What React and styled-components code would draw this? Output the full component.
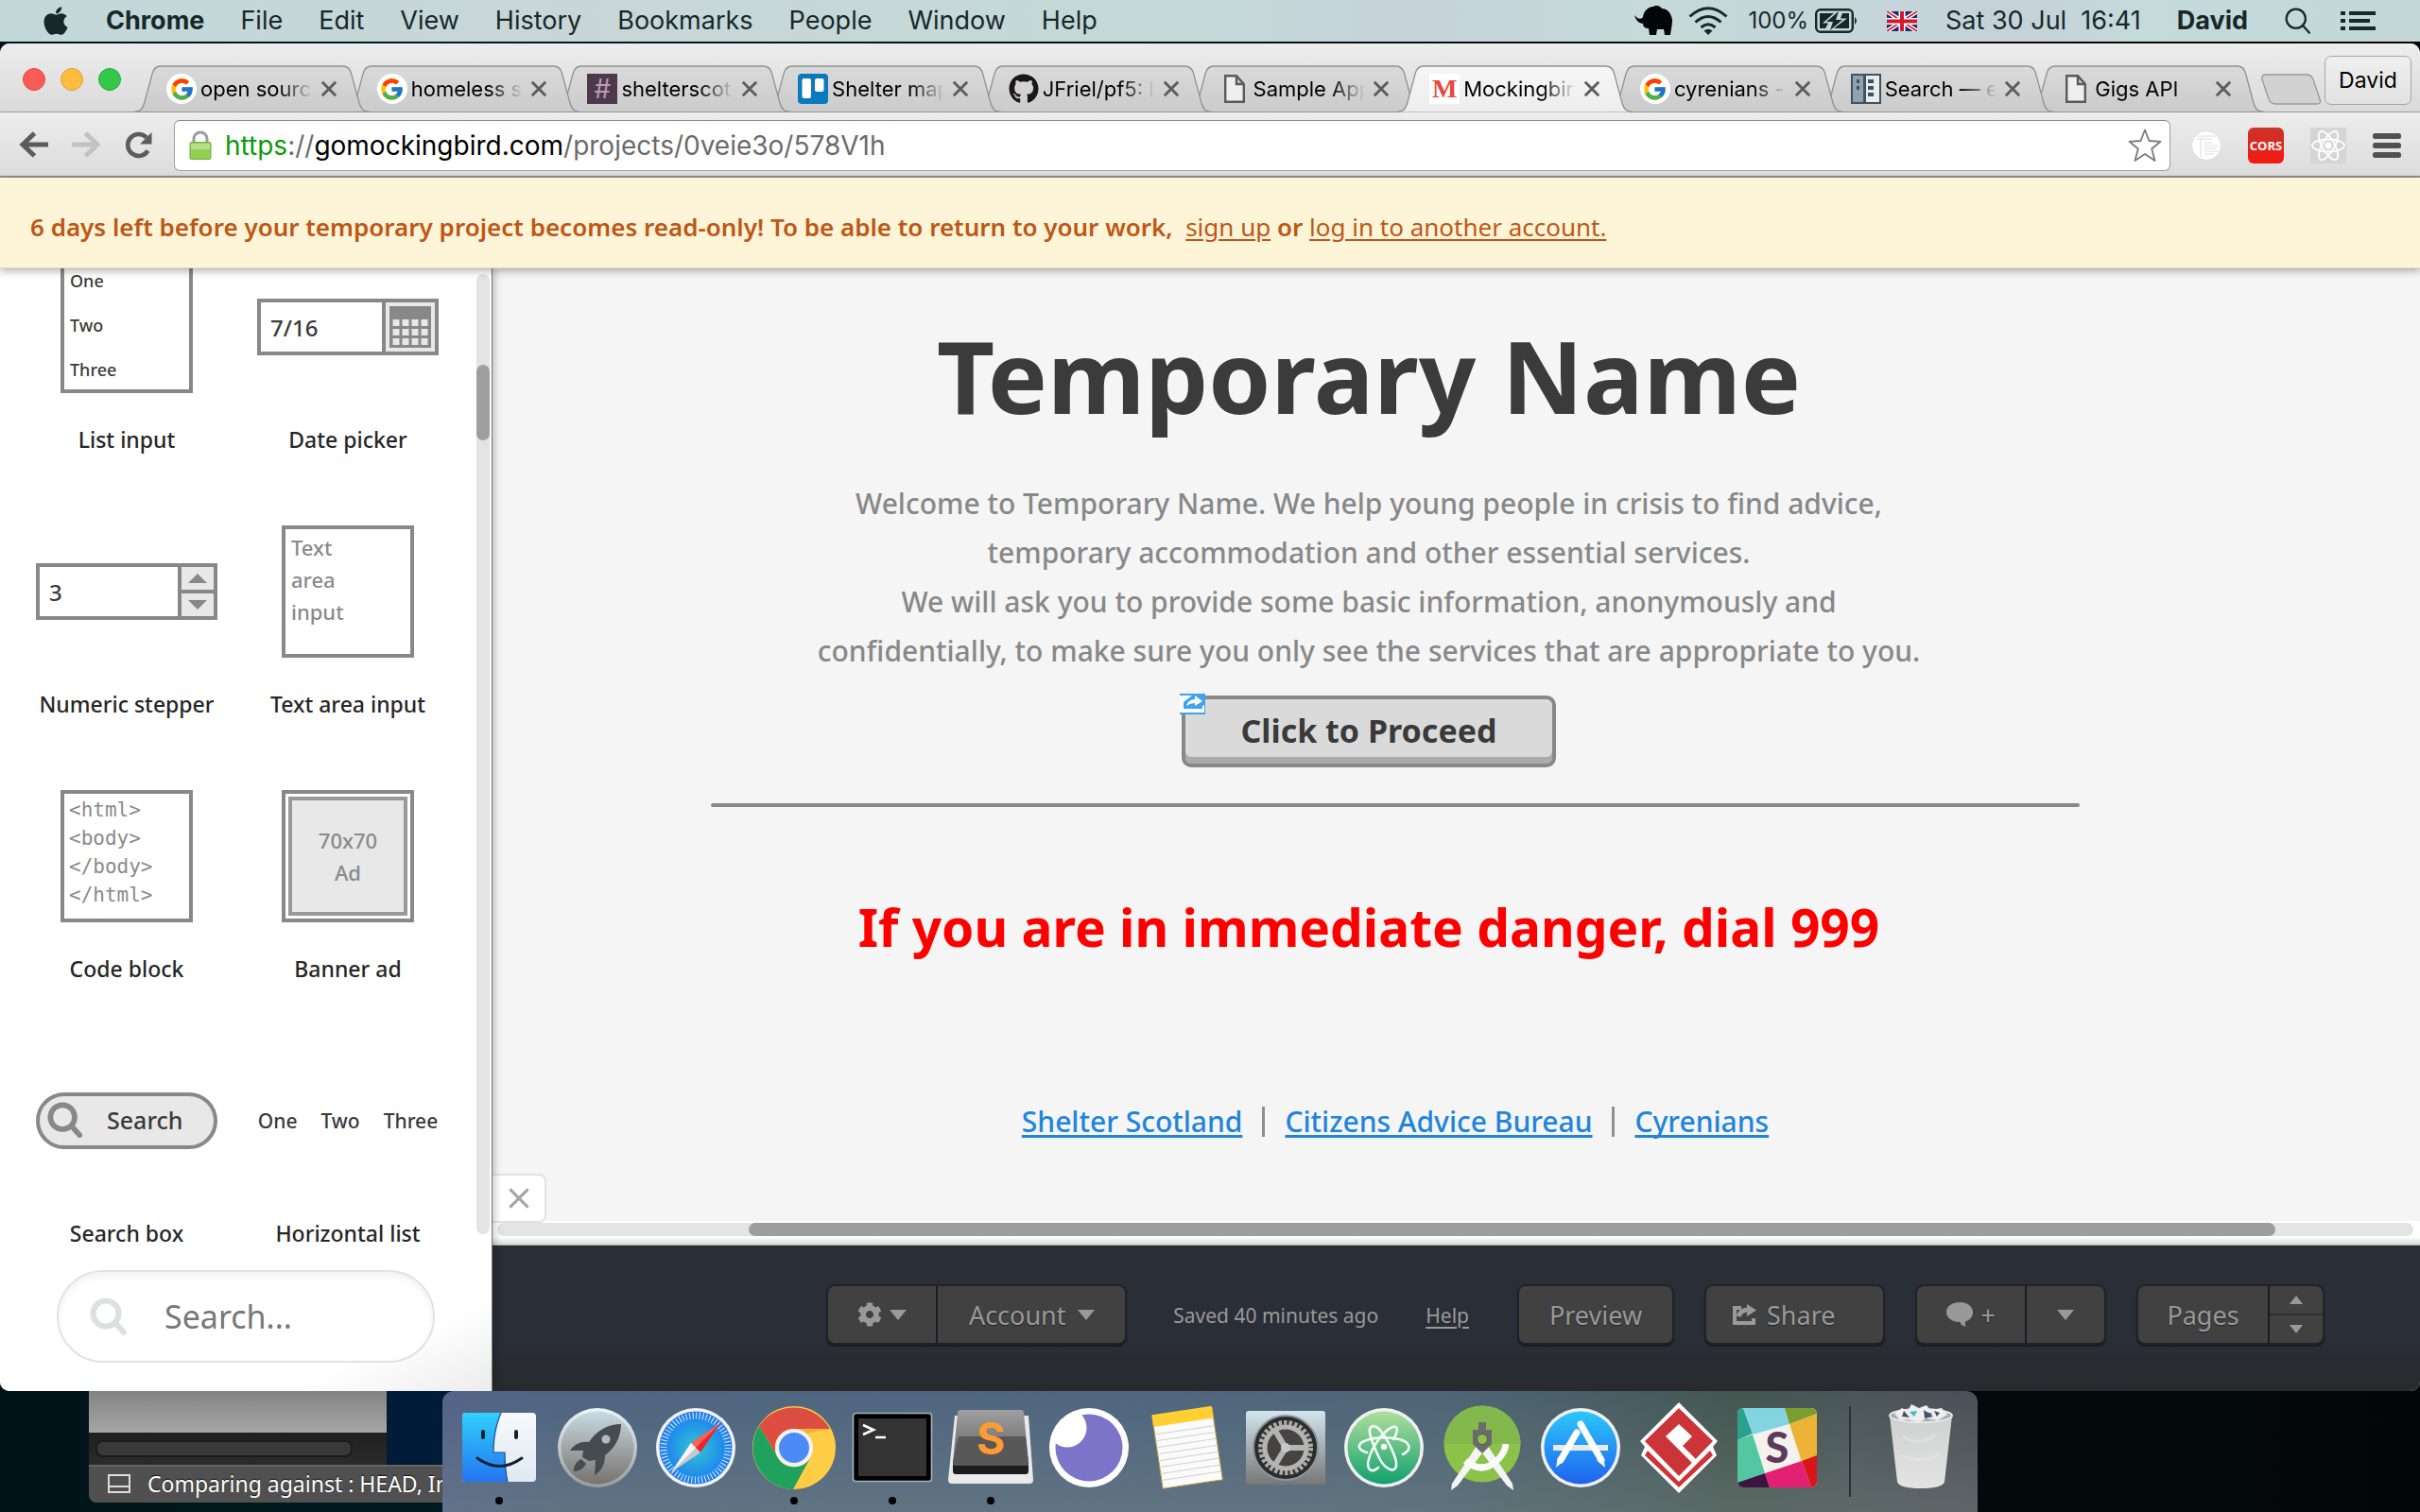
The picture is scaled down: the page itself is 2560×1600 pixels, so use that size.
import React from 'react';
import styled, { createGlobalStyle, css } from 'styled-components';
import { FaApple, FaGithub, FaCog } from 'react-icons/fa';
import { FcGoogle } from 'react-icons/fc';

const SYSTEM = '"Inter", "Liberation Sans", sans-serif';
const BODY = '"Noto Sans", "Open Sans", sans-serif';

const GlobalStyle = createGlobalStyle`
  *, *::before, *::after { box-sizing: border-box; }
  html, body { margin: 0; padding: 0; background: #000; }
  button, input, textarea { font: inherit; color: inherit; margin: 0; padding: 0; border: 0; background: none; }
  h1, h2, p, ul, pre { margin: 0; padding: 0; }
  ul { list-style: none; }
  svg { display: block; flex: none; }
`;

const Desktop = styled.div`
  display: flex;
  flex-direction: column;
  min-height: 100vh;
  overflow: hidden;
  background: linear-gradient(90deg, #001418 0%, #001b20 20%, #020a0b 80%, #030606 100%);
  font-family: ${SYSTEM};
`;

/* ---------- system menu bar ---------- */

const MenuBar = styled.header`
  display: flex;
  align-items: center;
  justify-content: space-between;
  height: 44px;
  margin-bottom: 2px;
  padding: 0 46px 0 42px;
  background: linear-gradient(90deg, #c2d8d8, #c9d6d8 24%, #c5d8d8 42%, #c5d9d9 50%, #c6d3da 58%, #c5dad9 68%, #c5d2d9 84%, #c5dadb 88%, #c2d7d6);
  color: #16282a;
  font-size: 27px;
  line-height: 44px;
`;

const MenuGroup = styled.nav`
  display: flex;
  align-items: center;
  gap: 38px;
`;

const AppleButton = styled.button`
  margin-right: -2px;
`;

const MenuItem = styled.button`
  font-weight: ${(p) => (p.$strong ? 700 : 400)};
  white-space: pre;
`;

const StatusGroup = styled.div`
  display: flex;
  align-items: center;
  gap: ${(p) => p.$gap}px;
`;

const Percent = styled.span`
  font-size: 24px;
`;

/* ---------- browser chrome ---------- */

const Browser = styled.section`
  display: flex;
  flex: 1;
  flex-direction: column;
  overflow: hidden;
  border-radius: 10px;
  background: #ebebeb;
`;

const TabStrip = styled.div`
  display: flex;
  align-items: flex-end;
  height: 73px;
  padding: 0 9px 0 24px;
  border-bottom: 1px solid #9a9a9a;
  background: linear-gradient(#ededed, #dadada);
`;

const Lights = styled.div`
  display: flex;
  gap: 16px;
  margin-right: 14px;
  padding-bottom: 22px;
`;

const Light = styled.button`
  && {
    width: 24px;
    height: 24px;
    border: 1px solid ${(p) => p.$edge};
    border-radius: 50%;
    background: ${(p) => p.$fill};
  }
`;

const TabList = styled.div`
  display: flex;
  flex: 1;
  min-width: 0;
  margin: 0 -3px -1px 0;
`;

const Tab = styled.div`
  position: relative;
  z-index: ${(p) => p.$z};
  display: flex;
  flex: 1 1 0;
  align-items: center;
  min-width: 0;
  height: 50px;
  padding: 0 34px;
  & + & { margin-left: -26px; }
`;

const TabShape = styled.svg`
  position: absolute;
  z-index: -1;
  inset: 0;
  width: 100%;
  height: 100%;
`;

const TabTitle = styled.span`
  flex: 1;
  min-width: 0;
  margin: 0 8px 0 4px;
  overflow: hidden;
  color: #000;
  font-size: 22px;
  line-height: 32px;
  white-space: nowrap;
  mask-image: linear-gradient(90deg, #000 calc(100% - 36px), transparent);
`;

const TabClose = styled.button`
  flex: none;
  width: 18px;
  height: 18px;
`;

const TabIcon = styled.span`
  display: flex;
  flex: none;
  align-items: center;
  justify-content: center;
  width: 32px;
  height: 32px;
  border-radius: ${(p) => p.$radius || 0};
  background: ${(p) => p.$fill || 'transparent'};
  color: ${(p) => p.$ink || '#000'};
  font: ${(p) => p.$weight || 400} 28px/32px ${(p) => p.$font || SYSTEM};
`;

const NewTab = styled.button`
  && { margin-bottom: 7px; }
`;

const Profile = styled.button`
  && {
    width: 92px;
    height: 52px;
    margin: 0 0 7px 3px;
    border: 1px solid #a5a5a5;
    border-radius: 7px;
    background: linear-gradient(#efefef, #e2e2e2);
    font-size: 23px;
  }
`;

const Toolbar = styled.div`
  display: flex;
  align-items: center;
  height: 69px;
  padding: 2px 20px 0;
  border-bottom: 2px solid #8f8f8f;
  background: linear-gradient(#ededed, #dcdcdc);
`;

const NavButtons = styled.div`
  display: flex;
  gap: 25px;
  margin-right: 22px;
`;

const IconButton = styled.button`
  display: flex;
`;

const Omnibox = styled.div`
  display: flex;
  flex: 1;
  align-items: center;
  height: 54px;
  padding: 0 8px 0 15px;
  border: 1px solid #a0a0a0;
  border-top-color: #8a8a8a;
  border-radius: 6px;
  background: #fff;
`;

const Address = styled.div`
  flex: 1;
  margin-left: 14px;
  color: #6b6b6b;
  font-size: 28px;
  line-height: 40px;
`;

const Scheme = styled.span`
  color: #0a9a0a;
`;

const Host = styled.span`
  color: #000;
`;

const Extensions = styled.div`
  display: flex;
  align-items: center;
  gap: 28px;
  margin-left: 22px;
`;

const Cors = styled.button`
  && {
    width: 38px;
    height: 38px;
    border-radius: 6px;
    background: linear-gradient(#c9342b, #f5190f);
    color: #fff;
    font: 700 13px/38px "Open Sans", sans-serif;
  }
`;

/* ---------- notice ---------- */

const Notice = styled.div`
  position: relative;
  z-index: 3;
  padding: 34px 32px 25px;
  border-bottom: 1px solid #ded8bd;
  background: #fef5d8;
  box-shadow: 0 3px 8px rgba(0, 0, 0, 0.3);
  color: #be5716;
  font: 600 26px/36px ${BODY};
`;

const NoticeLink = styled.a`
  color: inherit;
  font-weight: 400;
  text-decoration: underline;
  text-underline-offset: 3px;
`;

/* ---------- page body ---------- */

const Workspace = styled.div`
  display: flex;
  flex: 1;
  min-height: 0;
  font-family: ${BODY};
`;

const Sidebar = styled.aside`
  position: relative;
  z-index: 2;
  display: flex;
  flex: none;
  flex-direction: column;
  width: 521px;
  border-right: 1px solid #777;
  background: linear-gradient(155deg, #fff 93%, #ececec 100%);
  box-shadow: 2px 0 8px rgba(0, 0, 0, 0.25);
`;

const Palette = styled.div`
  display: flex;
  flex: 1 1 0;
  min-height: 0;
  overflow: hidden;
`;

const PaletteGrid = styled.div`
  display: grid;
  flex: 1;
  grid-template-columns: repeat(2, 1fr);
  grid-auto-rows: 280px;
  margin: -8px 19px 0 17px;
`;

const Cell = styled.div`
  display: flex;
  flex-direction: column;
  align-items: center;
`;

const Preview = styled.div`
  display: flex;
  align-items: center;
  justify-content: center;
  height: 140px;
`;

const Caption = styled.div`
  margin-top: 34px;
  color: #262626;
  font-size: 23px;
  font-weight: 500;
  line-height: 30px;
  white-space: nowrap;
`;

const boxed = css`
  border: 4px solid #888;
  background: #fff;
`;

const SquareList = styled.ul`
  && {
    ${boxed}
    display: flex;
    flex-direction: column;
    justify-content: center;
    width: 140px;
    height: 140px;
    padding: 0 6px 4px;
    color: #3a3a3a;
    font-size: 18px;
    font-weight: 500;
    line-height: 47px;
  }
`;

const Field = styled.div`
  ${boxed}
  display: flex;
  width: 192px;
  height: 60px;
`;

const FieldInput = styled.input`
  && {
    flex: 1;
    min-width: 0;
    padding-left: 10px;
    color: #3a3a3a;
    font-size: 24px;
    font-weight: 500;
  }
`;

const FieldButton = styled.button`
  && {
    display: flex;
    align-items: center;
    justify-content: center;
    width: 56px;
    border-left: 4px solid #888;
    background: #e8e8e8;
  }
`;

const Stepper = styled.div`
  display: flex;
  flex-direction: column;
  width: 38px;
  border-left: 4px solid #888;
  background: #e8e8e8;
`;

const StepButton = styled.button`
  display: flex;
  flex: 1;
  align-items: center;
  justify-content: center;
  & + & { border-top: 4px solid #888; }
`;

const SquareArea = styled.textarea`
  && {
    ${boxed}
    width: 140px;
    height: 140px;
    padding: 2px 6px;
    overflow: hidden;
    resize: none;
    color: #8a8a8a;
    font-size: 22px;
    font-weight: 500;
    line-height: 34px;
  }
`;

const CodeBox = styled.pre`
  && {
    ${boxed}
    width: 140px;
    height: 140px;
    padding: 2px 5px;
    overflow: hidden;
    color: #8a8a8a;
    font: 400 21px/30px "DejaVu Sans Mono", "Liberation Mono", monospace;
  }
`;

const AdBox = styled.div`
  ${boxed}
  display: flex;
  width: 140px;
  height: 140px;
  padding: 3px;
`;

const AdInner = styled.div`
  display: flex;
  flex: 1;
  align-items: center;
  justify-content: center;
  border: 4px solid #999;
  background: #e8e8e8;
  color: #8a8a8a;
  font-size: 22px;
  font-weight: 500;
  line-height: 34px;
  text-align: center;
`;

const SearchPill = styled.button`
  && {
    display: flex;
    align-items: center;
    gap: 25px;
    width: 192px;
    height: 60px;
    padding: 0 8px 2px;
    border: 4px solid #888;
    border-radius: 30px;
    background: #e8e8e8;
    color: #3a3a3a;
    font-size: 25px;
    font-weight: 500;
  }
`;

const InlineList = styled.ul`
  display: flex;
  gap: 25px;
  color: #3a3a3a;
  font-size: 21px;
  font-weight: 500;
`;

const VTrack = styled.div`
  flex: none;
  width: 14px;
  margin: 6px 2px 14px 0;
  padding-top: 96px;
  border-radius: 7px;
  background: #e4e4e4;
`;

const VThumb = styled.div`
  height: 80px;
  border-radius: 7px;
  background: #9f9f9f;
`;

const SearchBar = styled.label`
  display: flex;
  align-items: center;
  gap: 39px;
  height: 98px;
  margin: 24px 60px 30px;
  padding: 0 33px;
  border: 2px solid #e2e2e2;
  border-radius: 49px;
  background: #fff;
  box-shadow: inset 0 4px 8px rgba(0, 0, 0, 0.06);
  color: #777;
  font-size: 34px;
`;

const SearchInput = styled.input`
  flex: 1;
  min-width: 0;
  &::placeholder { color: #777; opacity: 1; }
`;

const Main = styled.main`
  display: flex;
  flex: 1;
  flex-direction: column;
  min-width: 0;
`;

const Canvas = styled.div`
  position: relative;
  flex: 1;
  padding: 53px 0 0 231px;
  background: #f5f5f5;
`;

const Mockup = styled.div`
  width: 1448px;
`;

const Intro = styled.section`
  display: flex;
  flex-direction: column;
  align-items: center;
  width: 1392px;
`;

const Title = styled.h1`
  color: #3b3b3b;
  font-size: 106px;
  font-weight: 700;
  line-height: 120px;
  white-space: nowrap;
`;

const Lead = styled.p`
  && { margin-top: 50px; }
  color: #888;
  font-size: 30px;
  font-weight: 500;
  line-height: 52px;
  text-align: center;
  white-space: nowrap;
`;

const Proceed = styled.button`
  && {
    position: relative;
    width: 396px;
    height: 76px;
    margin-top: 21px;
    padding-bottom: 2px;
    border: 4px solid #888;
    border-radius: 10px;
    background: #dadada;
    box-shadow: inset 0 -7px 0 #ababab;
    color: #3a3a3a;
    font-size: 34px;
    font-weight: 700;
  }
`;

const LinkBadge = styled.svg`
  position: absolute;
  top: -6px;
  left: -6px;
`;

const Rule = styled.div`
  height: 4px;
  margin-top: 38px;
  border-radius: 2px;
  background: #888;
`;

const Warning = styled.h2`
  && { margin-top: 95px; }
  width: 1392px;
  color: #f00;
  font-size: 55px;
  font-weight: 700;
  line-height: 64px;
  text-align: center;
  white-space: nowrap;
`;

const Links = styled.nav`
  display: flex;
  align-items: center;
  justify-content: center;
  gap: 21px;
  margin-top: 154px;
`;

const PageLink = styled.a`
  color: #2084dc;
  font-size: 30px;
  font-weight: 500;
  line-height: 40px;
  text-decoration: underline;
  text-decoration-skip-ink: none;
  text-underline-offset: 3px;
`;

const Divider = styled.span`
  width: 3px;
  height: 32px;
  background: #909090;
`;

const ClosePanel = styled.button`
  && {
    position: absolute;
    bottom: -2px;
    left: 0;
    display: flex;
    align-items: center;
    justify-content: center;
    width: 57px;
    height: 52px;
    border: 2px solid #e2e2e2;
    border-left: 0;
    border-radius: 0 8px 8px 0;
    background: #fff;
  }
`;

const HScroll = styled.div`
  height: 26px;
  padding: 2px 7px 10px 5px;
  background: linear-gradient(#fff 17px, #d8d8d8 25px, #888 26px);
`;

const HTrack = styled.div`
  padding-left: 13.1%;
  padding-right: 7.2%;
  border-radius: 7px;
  background: #e4e4e4;
`;

const HThumb = styled.div`
  height: 14px;
  border-radius: 7px;
  background: #9e9e9e;
`;

const Footer = styled.footer`
  display: flex;
  align-items: center;
  justify-content: flex-end;
  gap: 32px;
  height: 154px;
  padding: 0 101px 8px 0;
  background: linear-gradient(#2a2e37 60%, #272a2d);
  color: #999;
  font-size: 27px;
`;

const Group = styled.div`
  display: flex;
  height: 64px;
  overflow: hidden;
  border: 2px solid #1f2328;
  border-radius: 9px;
  background: #414141;
  box-shadow: 0 2px 1px #191c20;
`;

const FootButton = styled.button`
  && {
    display: flex;
    align-items: center;
    justify-content: ${(p) => (p.$start ? 'flex-start' : 'center')};
    gap: ${(p) => p.$gap || 0}px;
    width: ${(p) => p.$w}px;
    height: 60px;
    padding-left: ${(p) => (p.$start ? 28 : 0)}px;
    border-left: ${(p) => (p.$split ? '2px solid #1b1d20' : '0')};
    text-shadow: 0 1px 1px #222;
  }
`;

const PageStep = styled.div`
  display: flex;
  flex-direction: column;
  width: 58px;
  border-left: 2px solid #1b1d20;
`;

const PageStepButton = styled.button`
  display: flex;
  flex: 1;
  align-items: center;
  justify-content: center;
  && + && { border-top: 2px solid #303230; }
`;

const SaveInfo = styled.div`
  display: flex;
  gap: 50px;
  margin: 2px 19px 0 17px;
  font-size: 21px;
`;

const HelpLink = styled.a`
  color: inherit;
  text-underline-offset: 4px;
`;

/* ---------- background window and dock ---------- */

const DockArea = styled.div`
  position: relative;
  display: flex;
  justify-content: center;
  height: 128px;
`;

const BackWindow = styled.div`
  position: absolute;
  top: 0;
  left: 94px;
  width: 420px;
  border-radius: 0 0 8px 8px;
  overflow: hidden;
  background: #2b2b2b;
`;

const BackBody = styled.div`
  display: flex;
  height: 78px;
  background: #001c38;
`;

const BackPane = styled.div`
  width: 315px;
  height: 78px;
  padding: 52px 36px 0 7px;
  background: linear-gradient(#838383, #a6a6a6 44px, #1f1f1f 44px, #2b2b2b);
`;

const BackScroll = styled.div`
  height: 18px;
  border: 2px solid #1b1b1b;
  border-radius: 8px;
  background: #393939;
`;

const BackStatus = styled.div`
  display: flex;
  align-items: center;
  gap: 18px;
  height: 40px;
  padding: 0 0 2px 20px;
  border-top: 2px solid #666;
  background: #505050;
  color: #fff;
  font: 400 23px/36px ${BODY};
  text-shadow: 0 -1px 1px #111;
  white-space: nowrap;
`;

const Dock = styled.nav`
  position: relative;
  display: flex;
  height: 128px;
  padding: 0 8px;
  border-radius: 12px 12px 0 0;
  background:
    linear-gradient(rgba(120, 130, 130, 0), rgba(130, 140, 135, 0.35)),
    linear-gradient(90deg, #53638a 0%, #4e6580 8%, #4f667f 45%, #4e6576 65%, #475c60 78%, #44564f 84%, #4a565a 92%, #4c4f57 100%);
`;

const DockItem = styled.button`
  && {
    display: flex;
    flex-direction: column;
    align-items: center;
    width: 104px;
    padding-top: 8px;
  }
  &::after {
    content: '';
    width: 8px;
    height: 8px;
    border-radius: 50%;
    background: ${(p) => (p.$open ? '#000' : 'transparent')};
  }
`;

const DockDivider = styled.div`
  width: 2px;
  height: 96px;
  margin: 16px 22px 0 24px;
  background: #2a3236;
`;

/* ---------- drawings ---------- */

const Cross = ({ size, color, width }) => (
  <svg width={size} height={size} viewBox="0 0 20 20" stroke={color} strokeWidth={width} fill="none">
    <path d="M2 2L18 18M18 2L2 18" />
  </svg>
);

const Caret = ({ w = 18, h = 11, up, color = '#999' }) => (
  <svg width={w} height={h} viewBox="0 0 18 11" preserveAspectRatio="none" fill={color}>
    <path d={up ? 'M0 11L9 0L18 11z' : 'M0 0H18L9 11z'} />
  </svg>
);

const Loupe = ({ size, color, width = 5 }) => (
  <svg width={size} height={size} viewBox="0 0 40 40" fill="none" stroke={color} strokeWidth={width} strokeLinecap="round">
    <circle cx="17" cy="17" r="13.5" />
    <path d="M27 27L36 37" />
  </svg>
);

const Elephant = () => (
  <svg width="40" height="32" viewBox="0 0 40 32" fill="#020608">
    <path d="M0 10C3 14 7 15 9 12C10 5 15 1 20 1C23-1 27 0 29 3C35 3 39 8 40 15C40 20 39 24 38 31H32L31 25H24L23 31H16L15 24C11 24 9 22 9 19C5 19 1 15 0 10z" />
  </svg>
);

const Wifi = () => (
  <svg width="42" height="30" viewBox="0 0 42 30" fill="none" stroke="#16282a" strokeWidth="3">
    <path d="M1.500 10.500Q21-7 40.500 10.500M7.500 16.500Q21 4.500 34.500 16.500M13.500 22Q21 15.500 28.500 22" />
    <path d="M16.500 25.500Q21 22 25.500 25.500L21 30z" fill="#16282a" stroke="none" />
  </svg>
);

const Battery = () => (
  <svg width="46" height="26" viewBox="0 0 46 26">
    <rect x="1.200" y="1.200" width="38.600" height="23.600" rx="4.500" fill="none" stroke="#16282a" strokeWidth="2.400" />
    <path d="M5 5H20L8 15.500H14L11 21H5zM29 5H36V21H20L34 10.500H27z" fill="#16282a" />
    <path d="M25 3L12 14H19L16 23L29 12H22L25 3z" fill="#16282a" />
    <path d="M42 9Q46 13 42 17z" fill="#16282a" />
  </svg>
);

const Flag = () => (
  <svg width="32" height="21" viewBox="0 0 32 21">
    <rect width="32" height="21" fill="#1f2a6b" />
    <path d="M0 0L32 21M32 0L0 21" stroke="#fff" strokeWidth="4.500" />
    <path d="M0 0L32 21M32 0L0 21" stroke="#d5172f" strokeWidth="1.600" />
    <path d="M16 0V21M0 10.500H32" stroke="#fff" strokeWidth="7" />
    <path d="M16 0V21M0 10.500H32" stroke="#d5172f" strokeWidth="4" />
  </svg>
);

const ListIcon = () => (
  <svg width="38" height="22" viewBox="0 0 38 22" fill="#16282a">
    <path d="M0 1H5V5H0zM0 9H5V13H0zM0 17H5V21H0zM9 1H37V5H9zM9 9H31V13H9zM9 17H37V21H9z" />
  </svg>
);

const DocIcon = () => (
  <svg width="22" height="30" viewBox="0 0 22 30" fill="#efefef" stroke="#5a5a5a" strokeWidth="2.400">
    <path d="M1.200 1.200H13L20.800 10V28.800H1.200zM13 1.200V10H20.800" />
  </svg>
);

const TrelloIcon = () => (
  <svg width="32" height="32" viewBox="0 0 32 32">
    <rect width="32" height="32" rx="4" fill="#0a79bf" />
    <rect x="4.500" y="5" width="9.500" height="21" rx="2" fill="#fff" />
    <rect x="18" y="5" width="9.500" height="14" rx="2" fill="#fff" />
  </svg>
);

const BuildingIcon = () => (
  <svg width="32" height="32" viewBox="0 0 32 32">
    <rect width="32" height="32" fill="#42515c" />
    <path d="M2 2H13V30H2z" fill="#8ea3b1" />
    <path d="M16 2H30V30H16z" fill="#e6edf0" />
    <path d="M6 6H9V10H6zM6 13H9V17H6zM18 6H24V10H18zM18 13H24V17H18zM18 20H24V24H18z" fill="#42515c" />
  </svg>
);

const TabOutline = ({ active }) => (
  <TabShape viewBox="0 0 248 50" preserveAspectRatio="none">
    <defs>
      <linearGradient id={active ? 'tabOn' : 'tabOff'} x1="0" y1="0" x2="0" y2="1">
        <stop offset="0" stopColor={active ? '#f6f6f6' : '#dadada'} />
        <stop offset="1" stopColor={active ? '#ededed' : '#cbcbcb'} />
      </linearGradient>
    </defs>
    <path
      d="M0 49.500C7 49 9 46 11 39L19 9Q21 1 28 1H220Q227 1 229 9L237 39C239 46 241 49 248 49.500"
      fill={active ? 'url(#tabOn)' : 'url(#tabOff)'}
      stroke="#929292"
      strokeWidth="1.300"
    />
    {!active && <path d="M2 49.500H246" stroke="#929292" />}
  </TabShape>
);

const Back = ({ color, flip }) => (
  <svg width="31" height="28" viewBox="0 0 31 28" fill="none" stroke={color} strokeWidth="5">
    <path d={flip ? 'M0 14H27M14.500 2L27 14L14.500 26' : 'M31 14H4M16.500 2L4 14L16.500 26'} />
  </svg>
);

const Reload = () => (
  <svg width="30" height="30" viewBox="0 0 30 30">
    <path d="M24.500 20.500A11.500 11.500 0 1 1 23 6.500" fill="none" stroke="#5c5c5c" strokeWidth="4.600" />
    <path d="M28.500 1V13.500H16z" fill="#5c5c5c" />
  </svg>
);

const Lock = () => (
  <svg width="24" height="32" viewBox="0 0 24 32">
    <path d="M5 14V9A7 7 0 0 1 19 9V14" fill="none" stroke="#9b9b9b" strokeWidth="3" />
    <rect x="1" y="12.500" width="22" height="18" rx="1.500" fill="#92d050" stroke="#6cad3c" />
    <path d="M2 14H22V20H2z" fill="#b5e08a" />
  </svg>
);

const Star = () => (
  <svg width="36" height="36" viewBox="0 0 36 36" fill="#fff" stroke="#7a7a7a" strokeWidth="1.800" strokeLinejoin="round">
    <path d="M18 1.500L22.500 13L34.500 13.800L25.200 21.500L28.500 34L18 27L7.500 34L10.800 21.500L1.500 13.800L13.500 13z" />
  </svg>
);

const PageExt = () => (
  <svg width="32" height="32" viewBox="0 0 32 32">
    <circle cx="16" cy="16" r="15.500" fill="#fff" stroke="#ddd" />
    <path d="M6 6H26M6 9H22M14 13H22M14 16H28M14 19H26M14 22H29M14 25H24M10 8V28" stroke="#dcdcdc" strokeWidth="1" />
  </svg>
);

const ReactExt = () => (
  <svg width="38" height="38" viewBox="0 0 38 38">
    <rect width="38" height="38" fill="#d5d5d5" />
    <g fill="none" stroke="#fff" strokeWidth="1.800">
      <ellipse cx="19" cy="19" rx="17" ry="6.500" />
      <ellipse cx="19" cy="19" rx="17" ry="6.500" transform="rotate(60 19 19)" />
      <ellipse cx="19" cy="19" rx="17" ry="6.500" transform="rotate(120 19 19)" />
    </g>
    <circle cx="19" cy="19" r="3.500" fill="#fff" />
  </svg>
);

const Burger = () => (
  <svg width="30" height="26" viewBox="0 0 30 26" fill="#505050">
    <rect width="30" height="6" rx="2.500" />
    <rect y="10" width="30" height="6" rx="2.500" />
    <rect y="20" width="30" height="6" rx="2.500" />
  </svg>
);

const Calendar = () => (
  <svg width="44" height="44" viewBox="0 0 44 44">
    <rect width="44" height="44" fill="#888" />
    {[14, 24, 34].map((y) => [3.5, 13.5, 23.5, 33.5].map((x) => (
      <rect key={`${x}-${y}`} x={x} y={y} width="7" height="7" fill="#e8e8e8" />
    )))}
  </svg>
);

const ShareIcon = () => (
  <svg width="26" height="22" viewBox="0 0 26 22" fill="none" stroke="#999" strokeWidth="4">
    <path d="M9 4H2V20H22V15" />
    <path d="M6 13Q8 6 17 6" strokeWidth="5" />
    <path d="M15 0L25 6.500L15 13z" fill="#999" stroke="none" />
  </svg>
);

const Bubble = () => (
  <svg width="28" height="26" viewBox="0 0 28 26" fill="#999">
    <path d="M14 0C22 0 28 4.500 28 10.500C28 16 24 19.500 20 20.500C19.500 23 20 24.500 20.500 26C17 25 15 23 14.500 21C6 21 0 16.500 0 10.500C0 4.500 6 0 14 0z" />
  </svg>
);

const Icon = ({ children }) => (
  <svg width="104" height="104" viewBox="0 0 104 104">{children}</svg>
);

const Grad = ({ id, a, b }) => (
  <linearGradient id={id} x1="0" y1="0" x2="0" y2="1">
    <stop offset="0" stopColor={a} />
    <stop offset="1" stopColor={b} />
  </linearGradient>
);

const Finder = () => (
  <Icon>
    <defs><Grad id="fa" a="#30d0fb" b="#2475f2" /><Grad id="fb" a="#f8f9fb" b="#dfe9f3" /></defs>
    <rect x="13" y="15" width="78" height="73" rx="4" fill="url(#fb)" />
    <path d="M17 15H54C48 29 46 42 46 57H58C58 69 59 79 61 88H17Q13 88 13 84V19Q13 15 17 15z" fill="url(#fa)" />
    <path d="M54 15C48 29 46 42 46 57H58C58 69 59 79 61 88" fill="none" stroke="#1e4d8c" strokeWidth="1.200" />
    <path d="M35 35V41M70 35V41" stroke="#10222f" strokeWidth="4" strokeLinecap="round" />
    <path d="M29 63Q52 80 76 63" fill="none" stroke="#10222f" strokeWidth="3" strokeLinecap="round" />
  </Icon>
);

const Launchpad = () => (
  <Icon>
    <defs><Grad id="la" a="#c9dbe2" b="#77726f" /><Grad id="lb" a="#eaf6fa" b="#9a9a9a" /></defs>
    <circle cx="52" cy="52" r="42" fill="url(#lb)" />
    <circle cx="52" cy="52" r="38.500" fill="url(#la)" />
    <path d="M77 27C63 27 51 34 43 46C35 45 28 48 23 55L37 55L36 62L43 66L50 65L49 81C57 76 60 69 60 60C71 52 77 40 77 27z" fill="#454b50" />
    <path d="M35 64C29 67 27 71 27 77C33 77 37 74 40 69z" fill="#454b50" />
    <circle cx="61" cy="43" r="4.500" fill="#aebdc3" />
  </Icon>
);

const Safari = () => (
  <Icon>
    <defs><radialGradient id="sb"><stop offset="0" stopColor="#2fc9d8" /><stop offset="1" stopColor="#1d78ef" /></radialGradient></defs>
    <circle cx="52" cy="52" r="42" fill="#f2f2f2" />
    <circle cx="52" cy="52" r="38.500" fill="url(#sb)" />
    <circle cx="52" cy="52" r="34" fill="none" stroke="#dff0ff" strokeWidth="7" strokeDasharray="1 2.560" />
    <path d="M78 26L57 57L47 47z" fill="#e8262d" />
    <path d="M78 26L47 47L52 52z" fill="#ff6158" />
    <path d="M26 78L47 47L57 57z" fill="#c9c9c9" />
    <path d="M26 78L47 47L52 52z" fill="#f7f7f7" />
  </Icon>
);

const ChromeIcon = () => (
  <Icon>
    <circle cx="52" cy="52" r="44" fill="#ffcd46" />
    <path d="M15 29A44 44 0 0 1 90 32H52A20 20 0 0 0 34 61z" fill="#de4d42" />
    <path d="M15 29A44 44 0 0 0 51 96L69 63A20 20 0 0 1 34 61z" fill="#20a25f" />
    <path d="M52 32H90L60 38z" fill="#dfa92f" opacity="0.700" />
    <circle cx="52" cy="52" r="20" fill="#f2f2f2" />
    <circle cx="52" cy="52" r="16" fill="#4c8bf5" />
  </Icon>
);

const Terminal = () => (
  <Icon>
    <rect x="10.500" y="15.500" width="83" height="72" rx="3" fill="#000" stroke="#a7b3b8" strokeWidth="1.600" />
    <rect x="16" y="21" width="72" height="61" fill="#333" />
    <path d="M21 28L32 33L21 38M34 41H45" fill="none" stroke="#fff" strokeWidth="2.600" />
  </Icon>
);

const Sublime = () => (
  <Icon>
    <defs><Grad id="su" a="#a0a0a0" b="#5c5c5c" /></defs>
    <path d="M14 18H92L97 86Q97 90 93 90H11Q7 90 7 86z" fill="#e9e9e9" />
    <path d="M12 70H92V77Q92 80 89 80H15Q12 80 12 77z" fill="#1c1c1c" />
    <path d="M20 12H84Q87 12 87 15L92 68Q92 71 89 71H15Q12 71 12 68L17 15Q17 12 20 12z" fill="url(#su)" />
    <path d="M18 40H89L92 68Q92 71 89 71H15Q12 71 12 68z" fill="#585858" />
    <text x="52" y="59" textAnchor="middle" fontFamily="Inter, sans-serif" fontSize="46" fontWeight="700" fill="#ff9b31">S</text>
  </Icon>
);

const Orb = () => (
  <Icon>
    <defs><clipPath id="orb"><circle cx="52" cy="52" r="42" /></clipPath></defs>
    <circle cx="52" cy="52" r="42" fill="#fff" />
    <circle cx="52" cy="52" r="35.500" fill="#7b74c9" />
    <circle cx="29" cy="31" r="20.500" fill="#fff" clipPath="url(#orb)" />
  </Icon>
);

const Notes = () => (
  <Icon>
    <g transform="rotate(-8.500 52 52)">
      <rect x="20" y="14" width="64" height="77" fill="#fbfbfb" stroke="#b3933a" />
      <rect x="20" y="12" width="64" height="13" fill="#ffcf33" />
      <path d="M20 33H84M20 40H84M20 47H84M20 54H84M20 61H84M20 68H84M20 75H84M20 82H84" stroke="#d0d0d0" />
    </g>
  </Icon>
);

const Settings = () => (
  <Icon>
    <defs><Grad id="se" a="#d2e5ec" b="#777" /></defs>
    <rect x="10" y="13" width="84" height="78" rx="3" fill="url(#se)" />
    <circle cx="52" cy="52" r="34" fill="#2c2c2c" stroke="#8c989d" strokeWidth="2" />
    <circle cx="52" cy="52" r="26.500" fill="none" stroke="#aaa" strokeWidth="5" strokeDasharray="3.500 2.050" />
    <circle cx="52" cy="52" r="22" fill="#444" stroke="#b6b3b0" strokeWidth="5" />
    <path d="M52 52L41 34M52 52H73M52 52L41 70" stroke="#b6b3b0" strokeWidth="6" />
    <circle cx="52" cy="52" r="5" fill="#c8c8c8" />
  </Icon>
);

const Atom = () => (
  <Icon>
    <defs><Grad id="at" a="#aedf9c" b="#12a06f" /></defs>
    <circle cx="52" cy="52" r="42" fill="#f0f0f0" />
    <circle cx="52" cy="52" r="38.500" fill="url(#at)" />
    <g fill="none" stroke="#f3fff8" strokeWidth="2.600" strokeLinecap="round">
      <path d="M72 59C82 54 80 46 68 43C56 40 38 41 29 46C23 50 26 55 34 57" />
      <path d="M38 40C34 28 42 25 50 36C58 47 66 64 65 71C64 79 54 76 47 63C43 54 40 48 38 40" />
      <path d="M62 43C68 33 67 27 59 31C50 36 39 52 36 64C33 74 38 80 46 73" />
    </g>
    <circle cx="52" cy="51" r="3.200" fill="#f3fff8" />
  </Icon>
);

const Studio = () => (
  <Icon>
    <circle cx="52" cy="48" r="40.500" fill="#8bc34a" />
    <path d="M11.500 48A40.500 40.500 0 0 1 92.500 48z" fill="#82b84c" />
    <path d="M46 50L20 90L19 97L26 92L54 55zM58 50L84 90L85 97L78 92L50 55z" fill="#f4f4f4" />
    <path d="M34 66Q52 80 67 66Q76 58 77 48" fill="none" stroke="#fafafa" strokeWidth="7" />
    <path d="M48 25H56V33H62V48L52 58L42 48V33H48z" fill="#6b6b6b" />
    <circle cx="52" cy="43" r="5.500" fill="#8bc34a" stroke="#585858" />
  </Icon>
);

const AppStore = () => (
  <Icon>
    <defs><Grad id="as" a="#2bc7fb" b="#1f63ee" /></defs>
    <circle cx="52" cy="52" r="42" fill="#f0f0f0" />
    <circle cx="52" cy="52" r="38.500" fill="url(#as)" />
    <path d="M23 52H81" stroke="#e9e9e9" strokeWidth="6" />
    <path d="M52 27L74 65" stroke="#fff" strokeWidth="7" strokeLinecap="round" />
    <path d="M48 36L31 65" stroke="#fff" strokeWidth="7" strokeLinecap="round" />
    <path d="M69 65L76 61L78 73zM28 62L34 66L26 73z" fill="#fff" />
  </Icon>
);

const Paradigm = () => (
  <Icon>
    <path d="M52 4L93 45L88 51L92 60L52 100L12 60L16 51L11 45z" fill="#fff" />
    <path d="M52 10L88 45L52 82L16 45z" fill="#cb3537" />
    <path d="M19 55L52 88L85 55L88 60L52 94L16 60z" fill="#cb3537" />
    <path d="M52 27L66 40L56 50L70 64L66 68L38 40z" fill="#fff" />
  </Icon>
);

const Slack = () => (
  <Icon>
    <defs><clipPath id="sl"><rect x="10" y="10" width="84" height="84" rx="6" /></clipPath></defs>
    <g clipPath="url(#sl)">
      <rect x="10" y="10" width="84" height="84" fill="#f5f2ee" />
      <path d="M10 10H16L26 37L10 44z" fill="#2ba08c" />
      <path d="M16 10H60L65 27L26 38z" fill="#82d4e1" />
      <path d="M60 10H94V16L65 27z" fill="#7b9c2e" />
      <path d="M65 27L94 16V61L78 67z" fill="#ecb336" />
      <path d="M10 44L26 38L39 79L10 90z" fill="#54c6a1" />
      <path d="M39 79L78 66L88 94H44z" fill="#e32072" />
      <path d="M78 66L94 60V94H88z" fill="#d8151b" />
      <path d="M10 89L39 79L44 94H10z" fill="#3f1340" />
    </g>
    <text x="52" y="68" textAnchor="middle" fontFamily="Lato, sans-serif" fontSize="45" fontWeight="900" fill="#5d3a5c">S</text>
  </Icon>
);

const Trash = () => (
  <Icon>
    <defs><Grad id="tr" a="#cfd0d0" b="#e4e4e4" /></defs>
    <path d="M19 18L85 18L77 88Q75 95 52 95Q29 95 27 88z" fill="url(#tr)" />
    <ellipse cx="52" cy="18" rx="33" ry="7" fill="#a9abab" stroke="#e6e6e6" strokeWidth="2" />
    <path d="M24 16L32 10L38 13L42 6L50 10L58 7L62 12L74 10L80 17L70 23L58 21L50 25L38 22L30 23z" fill="#eee" />
    <path d="M34 13L40 20L32 19zM55 12L65 19L56 21zM66 13L72 15L69 19z" fill="#4a4f55" />
    <path d="M40 14L48 13L45 19z" fill="#3fb7d6" />
    <path d="M58 14L64 16L60 20z" fill="#3858a0" />
    <path d="M33 40Q50 52 68 38M32 60Q52 70 72 58" stroke="#eaeaea" strokeWidth="3" fill="none" opacity="0.500" />
  </Icon>
);

/* ---------- data ---------- */

const googleIcon = <TabIcon $fill="#fff" $radius="50%"><FcGoogle size={27} /></TabIcon>;
const docIcon = <TabIcon><DocIcon /></TabIcon>;

const tabs = [
  { title: 'open sourc', icon: googleIcon },
  { title: 'homeless s', icon: googleIcon },
  { title: 'shelterscot', icon: <TabIcon $fill="#4d394b" $ink="#b79cb4">#</TabIcon> },
  { title: 'Shelter map', icon: <TabIcon><TrelloIcon /></TabIcon> },
  { title: 'JFriel/pf5: l', icon: <TabIcon $ink="#191717"><FaGithub size={32} /></TabIcon> },
  { title: 'Sample App', icon: docIcon },
  { title: 'Mockingbir', active: true, icon: <TabIcon $fill="#fff" $ink="#e8483f" $weight={700} $font='"Liberation Serif", serif'>M</TabIcon> },
  { title: 'cyrenians -', icon: googleIcon },
  { title: 'Search — e', icon: <TabIcon><BuildingIcon /></TabIcon> },
  { title: 'Gigs API', icon: docIcon },
];

const menus = ['File', 'Edit', 'View', 'History', 'Bookmarks', 'People', 'Window', 'Help'];

const dockApps = [
  ['Finder', Finder, true], ['Launchpad', Launchpad], ['Safari', Safari], ['Chrome', ChromeIcon, true],
  ['Terminal', Terminal, true], ['Sublime Text', Sublime, true], ['Orb', Orb], ['Notes', Notes],
  ['System Preferences', Settings], ['Atom', Atom], ['Android Studio', Studio], ['App Store', AppStore],
  ['Visual Paradigm', Paradigm], ['Slack', Slack],
];

const Widget = ({ label, children }) => (
  <Cell>
    <Preview>{children}</Preview>
    <Caption>{label}</Caption>
  </Cell>
);

export default function App() {
  return (
    <Desktop>
      <GlobalStyle />
      <MenuBar>
        <MenuGroup>
          <AppleButton aria-label="System menu"><FaApple size={34} /></AppleButton>
          <MenuItem $strong>Chrome</MenuItem>
          {menus.map((m) => <MenuItem key={m}>{m}</MenuItem>)}
        </MenuGroup>
        <StatusGroup $gap={38}>
          <StatusGroup $gap={30}>
            <StatusGroup $gap={21}>
              <StatusGroup $gap={17}><Elephant /><Wifi /></StatusGroup>
              <StatusGroup $gap={7}><Percent>100%</Percent><Battery /></StatusGroup>
            </StatusGroup>
            <Flag />
            <MenuItem>{'Sat 30 Jul  16:41'}</MenuItem>
          </StatusGroup>
          <MenuItem $strong>David</MenuItem>
          <StatusGroup $gap={30}>
            <Loupe size={30} color="#16282a" width={3} />
            <ListIcon />
          </StatusGroup>
        </StatusGroup>
      </MenuBar>

      <Browser>
        <TabStrip>
          <Lights>
            <Light aria-label="Close" $fill="#fc5b57" $edge="#e2463f" />
            <Light aria-label="Minimise" $fill="#fdbc40" $edge="#e0a034" />
            <Light aria-label="Zoom" $fill="#34c84a" $edge="#27aa35" />
          </Lights>
          <TabList>
            {tabs.map((t, i) => (
              <Tab key={t.title} $z={t.active ? 20 : 10 - i}>
                <TabOutline active={t.active} />
                {t.icon}
                <TabTitle>{t.title}</TabTitle>
                <TabClose aria-label="Close tab"><Cross size={18} color="#5c5c5c" width={3.2} /></TabClose>
              </Tab>
            ))}
          </TabList>
          <NewTab aria-label="New tab">
            <svg width="64" height="33" viewBox="0 0 64 33" fill="#d2d2d2" stroke="#999" strokeWidth="1.300">
              <path d="M5 1H48Q53 1 55 6L62 27Q64 32 59 32H15Q10 32 8 27L1 6Q0 1 5 1z" />
            </svg>
          </NewTab>
          <Profile>David</Profile>
        </TabStrip>

        <Toolbar>
          <NavButtons>
            <IconButton aria-label="Back"><Back color="#5c5c5c" /></IconButton>
            <IconButton aria-label="Forward"><Back color="#c2c2c2" flip /></IconButton>
            <IconButton aria-label="Reload"><Reload /></IconButton>
          </NavButtons>
          <Omnibox>
            <Lock />
            <Address role="textbox" aria-label="Address">
              <Scheme>https</Scheme>://<Host>gomockingbird.com</Host>/projects/0veie3o/578V1h
            </Address>
            <IconButton aria-label="Bookmark"><Star /></IconButton>
          </Omnibox>
          <Extensions>
            <IconButton aria-label="Page extension"><PageExt /></IconButton>
            <Cors>CORS</Cors>
            <IconButton aria-label="React tools"><ReactExt /></IconButton>
            <IconButton aria-label="Menu"><Burger /></IconButton>
          </Extensions>
        </Toolbar>

        <Notice>
          6 days left before your temporary project becomes read-only! To be able to return to your work,
          {' '}&nbsp;<NoticeLink href="#signup">sign up</NoticeLink> or <NoticeLink href="#login">log in to another account.</NoticeLink>
        </Notice>

        <Workspace>
          <Sidebar>
            <Palette>
              <PaletteGrid>
                <Widget label="List input">
                  <SquareList><li>One</li><li>Two</li><li>Three</li></SquareList>
                </Widget>
                <Widget label="Date picker">
                  <Field>
                    <FieldInput aria-label="Date picker" defaultValue="7/16" />
                    <FieldButton aria-label="Open calendar"><Calendar /></FieldButton>
                  </Field>
                </Widget>
                <Widget label="Numeric stepper">
                  <Field>
                    <FieldInput aria-label="Numeric stepper" defaultValue="3" />
                    <Stepper>
                      <StepButton aria-label="Increase"><Caret up w={20} h={10} color="#888" /></StepButton>
                      <StepButton aria-label="Decrease"><Caret w={20} h={10} color="#888" /></StepButton>
                    </Stepper>
                  </Field>
                </Widget>
                <Widget label="Text area input">
                  <SquareArea aria-label="Text area input" defaultValue={'Text\narea\ninput'} />
                </Widget>
                <Widget label="Code block">
                  <CodeBox>{'<html>\n<body>\n</body>\n</html>'}</CodeBox>
                </Widget>
                <Widget label="Banner ad">
                  <AdBox><AdInner>70x70<br />Ad</AdInner></AdBox>
                </Widget>
                <Widget label="Search box">
                  <SearchPill><Loupe size={38} color="#888" width={6} />Search</SearchPill>
                </Widget>
                <Widget label="Horizontal list">
                  <InlineList><li>One</li><li>Two</li><li>Three</li></InlineList>
                </Widget>
              </PaletteGrid>
              <VTrack><VThumb /></VTrack>
            </Palette>
            <SearchBar>
              <Loupe size={40} color="#dedfe1" width={6} />
              <SearchInput aria-label="Search widgets" placeholder="Search..." />
            </SearchBar>
          </Sidebar>

          <Main>
            <Canvas>
              <Mockup>
                <Intro>
                  <Title>Temporary Name</Title>
                  <Lead>
                    Welcome to Temporary Name. We help young people in crisis to find advice,<br />
                    temporary accommodation and other essential services.<br />
                    We will ask you to provide some basic information, anonymously and<br />
                    confidentially, to make sure you only see the services that are appropriate to you.
                  </Lead>
                  <Proceed>
                    <LinkBadge width="27" height="22" viewBox="0 0 27 22">
                      <rect width="27" height="22" fill="#3fa2f0" />
                      <path d="M0 2H13L4 9V16H24V13L26 12V20H0z" fill="#fff" />
                      <path d="M7 13Q9 6 16 6V2L24 8L16 13V10Q11 10 7 13z" fill="#fff" />
                    </LinkBadge>
                    Click to Proceed
                  </Proceed>
                </Intro>
                <Rule />
                <Warning>If you are in immediate danger, dial 999</Warning>
                <Links>
                  <PageLink href="#shelter">Shelter Scotland</PageLink>
                  <Divider />
                  <PageLink href="#cab">Citizens Advice Bureau</PageLink>
                  <Divider />
                  <PageLink href="#cyrenians">Cyrenians</PageLink>
                </Links>
              </Mockup>
              <ClosePanel aria-label="Close panel"><Cross size={24} color="#a5a5a5" width={2.6} /></ClosePanel>
            </Canvas>
            <HScroll><HTrack><HThumb /></HTrack></HScroll>
            <Footer>
              <Group>
                <FootButton $w={114} $gap={8} aria-label="Settings"><FaCog size={26} /><Caret /></FootButton>
                <FootButton $w={200} $gap={12} $split>Account<Caret /></FootButton>
              </Group>
              <SaveInfo>
                <span>Saved 40 minutes ago</span>
                <HelpLink href="#help">Help</HelpLink>
              </SaveInfo>
              <Group><FootButton $w={162}>Preview</FootButton></Group>
              <Group><FootButton $w={187} $gap={10} $start><ShareIcon />Share</FootButton></Group>
              <Group>
                <FootButton $w={114} $gap={8}><Bubble />+</FootButton>
                <FootButton $w={84} $split aria-label="Comments"><Caret /></FootButton>
              </Group>
              <Group>
                <FootButton $w={137}>Pages</FootButton>
                <PageStep>
                  <PageStepButton aria-label="Previous page"><Caret up w={14} h={9} /></PageStepButton>
                  <PageStepButton aria-label="Next page"><Caret w={14} h={9} /></PageStepButton>
                </PageStep>
              </Group>
            </Footer>
          </Main>
        </Workspace>
      </Browser>

      <DockArea>
        <BackWindow>
          <BackBody><BackPane><BackScroll /></BackPane></BackBody>
          <BackStatus>
            <svg width="24" height="20" viewBox="0 0 24 20" fill="none" stroke="#ddd" strokeWidth="2">
              <path d="M1 1H23V19H1zM1 13H23" />
            </svg>
            Comparing against : HEAD, Index
          </BackStatus>
        </BackWindow>
        <Dock>
          {dockApps.map(([name, Drawing, open]) => (
            <DockItem key={name} aria-label={name} $open={open}><Drawing /></DockItem>
          ))}
          <DockDivider />
          <DockItem aria-label="Trash"><Trash /></DockItem>
        </Dock>
      </DockArea>
    </Desktop>
  );
}
